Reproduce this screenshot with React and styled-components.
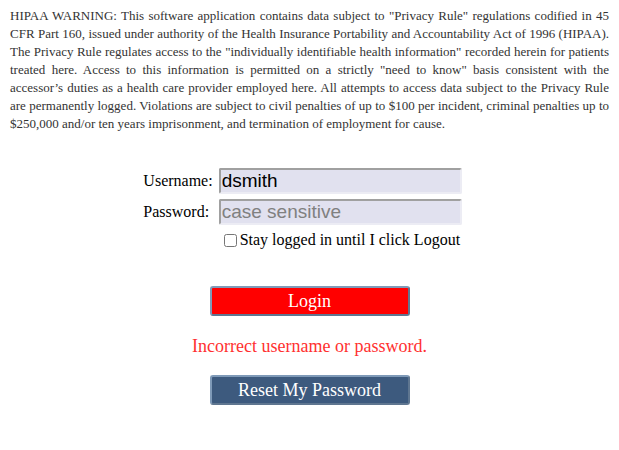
import styled, { createGlobalStyle } from "styled-components"

const GlobalStyle = createGlobalStyle`
  body {
    margin: 0;
    background: #ffffff;
    font-family: "Liberation Serif", "Times New Roman", serif;
  }
`

const Page = styled.div`
  width: 619px;
  padding: 7px 10px 0 10px;
  box-sizing: border-box;
`

const Warning = styled.p`
  margin: 0;
  font-size: 13px;
  line-height: 18px;
  color: #333333;
  text-align: justify;
`

const Form = styled.form`
  display: flex;
  flex-direction: column;
  align-items: center;
  margin-top: 35px;
`

const Fields = styled.div`
  display: grid;
  grid-template-columns: auto 243px;
  column-gap: 6px;
  row-gap: 5px;
  align-items: center;
  margin-left: -14px;
`

const Label = styled.label`
  font-size: 16px;
  color: #000;
  justify-self: ${(p) => p.$justify || "end"};
`

const Input = styled.input`
  box-sizing: border-box;
  width: 243px;
  height: 26px;
  padding: 1px 1px;
  font-family: "Liberation Sans", Arial, sans-serif;
  font-size: 19px;
  color: #000;
  background: #e1e1ef;
  border: 2px solid #a0a0a0;
  border-right-color: #ececf4;
  border-bottom-color: #ececf4;
  border-radius: 2px;
  outline: none;

  &::placeholder {
    color: #808080;
  }
`

const CheckRow = styled.label`
  grid-column: 2;
  display: flex;
  align-items: center;
  gap: 3px;
  font-size: 16px;
  color: #000;
  margin-left: 5px;
  margin-top: 1px;
`

const Check = styled.input`
  margin: 0;
  width: 13px;
  height: 13px;
`

const Button = styled.button`
  box-sizing: border-box;
  width: 200px;
  height: 30px;
  margin-top: ${(p) => p.$top || 0}px;
  font-family: "Liberation Serif", "Times New Roman", serif;
  font-size: 18px;
  color: #ffffff;
  background: ${(p) => p.$bg};
  border: 2px solid #7f9ab8;
  border-right-color: #5f7690;
  border-bottom-color: #5f7690;
  border-radius: 3px;
  cursor: pointer;
`

const Error = styled.div`
  margin-top: 20px;
  font-size: 18px;
  color: #ff3030;
`

export default function App() {
  return (
    <>
      <GlobalStyle />
      <Page>
        <Warning>
          HIPAA WARNING: This software application contains data subject to "Privacy Rule" regulations codified in 45
          CFR Part 160, issued under authority of the Health Insurance Portability and Accountability Act of 1996 (HIPAA).
          The Privacy Rule regulates access to the "individually identifiable health information" recorded herein for patients
          treated here. Access to this information is permitted on a strictly "need to know" basis consistent with the
          accessor’s duties as a health care provider employed here. All attempts to access data subject to the Privacy Rule
          are permanently logged. Violations are subject to civil penalties of up to $100 per incident, criminal penalties up to
          $250,000 and/or ten years imprisonment, and termination of employment for cause.
        </Warning>
        <Form onSubmit={(e) => e.preventDefault()}>
          <Fields>
            <Label htmlFor="user">Username:</Label>
            <Input id="user" defaultValue="dsmith" />
            <Label htmlFor="pass" $justify="start">Password:</Label>
            <Input id="pass" type="password" placeholder="case sensitive" />
            <CheckRow>
              <Check type="checkbox" />
              Stay logged in until I click Logout
            </CheckRow>
          </Fields>
          <Button type="submit" $bg="#ff0000" $top={37}>Login</Button>
          <Error>Incorrect username or password.</Error>
          <Button type="button" $bg="#3d5a7e" $top={18}>Reset My Password</Button>
        </Form>
      </Page>
    </>
  )
}
